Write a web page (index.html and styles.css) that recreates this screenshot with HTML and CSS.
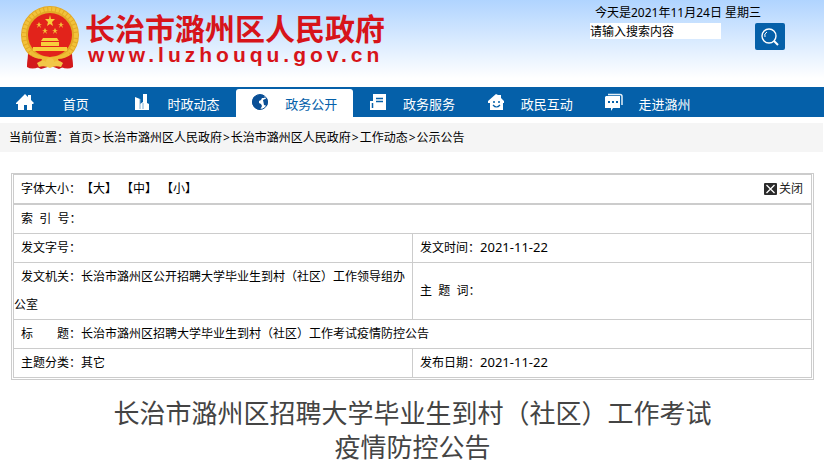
FILE: index.html
```
<!DOCTYPE html>
<html lang="zh-CN">
<head>
    <meta charset="UTF-8">
    <meta name="viewport" content="width=device-width, initial-scale=1.0">
    <title>长治市潞州区招聘大学毕业生到村（社区）工作考试疫情防控公告</title>
    <link rel="stylesheet" href="styles.css">
</head>
<body>

    <header class="header">
        <a class="logo" href="#">
            <svg class="emblem" viewBox="0 0 60 64" aria-hidden="true">
                <path d="M8 44 L6 61 L14 60 L20 63 L30 60 L38 63 L44 60 L52 61 L50 44 Z" fill="#c9151b"/>
                <circle cx="29" cy="29" r="29" fill="#e3a925"/>
                <circle cx="29" cy="29" r="26" fill="none" stroke="#f2c23a" stroke-width="4" stroke-dasharray="3 1"/>
                <circle cx="29" cy="29" r="22" fill="#e2231b"/>
                <path d="M29 9 l1 4 h4 l-3 3 1 4 -3 -2 -3 2 1 -4 -3 -3 h4z" fill="#f8cf3c"/>
                <path d="M18 16 l1 2 h2 l-2 1 1 3 -2 -2 -2 2 1 -3 -2 -1 h2z M40 16 l1 2 h2 l-2 1 1 3 -2 -2 -2 2 1 -3 -2 -1 h2z M24 22 l1 2 h2 l-2 1 1 3 -2 -2 -2 2 1 -3 -2 -1 h2z M34 22 l1 2 h2 l-2 1 1 3 -2 -2 -2 2 1 -3 -2 -1 h2z" fill="#f3bd37"/>
                <path d="M22 32 h14 l2 3 h-18z M20 36 h18 v4 h-18z M12 41 h34 v4 h-34z" fill="#f8cf3c"/>
                <path d="M9 44 q9 7 20 7 q11 0 20 -7 l-3 8 Q29 60 12 52Z" fill="#efbd34"/>
                <path d="M7 48 q7 5 14 5 l-3 8 q-7 3 -12 0z M51 48 q-7 5 -14 5 l3 8 q7 3 12 0z" fill="#d3191b"/>
                <path d="M16 57 q6 -4 9 -1 a4 4 0 0 1 8 0 q4 -3 9 1 l-2 4 q-6 -2 -11 1 q-6 -3 -11 -1z" fill="#f2c747"/>
            </svg>
            <span class="logo-text">
                <span class="site-name">长治市潞州区人民政府</span>
                <span class="site-url">www.luzhouqu.gov.cn</span>
            </span>
        </a>
        <div class="tools">
            <p class="today">今天是2021年11月24日 星期三</p>
            <form class="search">
                <input class="search-input" type="text" aria-label="搜索" value="请输入搜索内容">
                <button class="search-button" type="button" aria-label="搜索">
                    <svg width="18" height="18" viewBox="0 0 18 18" fill="none" stroke="#fff" stroke-width="1.4">
                        <circle cx="8" cy="8" r="7"/>
                        <path d="M4 9 a4 4 0 0 1 2 -5" stroke-width="1"/>
                        <path d="M13 13 l4 4" stroke-width="2"/>
                    </svg>
                </button>
            </form>
        </div>
    </header>

    <nav class="nav">
        <a class="nav-item" href="#">
            <svg viewBox="0 0 18 18"><path d="M9 1 L12 4 V2 h3 v5 l3 3 -1 1 h-1 v6 h-5 v-5 H8 v5 H2 v-6 H0 v-1z" fill="#fff"/></svg>
            <span>首页</span>
        </a>
        <a class="nav-item" href="#">
            <svg viewBox="0 0 18 18"><path d="M1 4 l5 2 v5 l3 -2 V1 h4 v9 l2 1 v6 H1z" fill="#fff"/><path d="M6 6 v10 M9 10 v6" stroke="#7faed3" stroke-width="1"/></svg>
            <span>时政动态</span>
        </a>
        <a class="nav-item active" href="#">
            <svg viewBox="0 0 18 18"><circle cx="9" cy="9" r="7.5" fill="#fff" stroke="#0a4f96"/><path d="M2 5 Q5 1 12 2 l2 3 -3 0 -1 2 -2 1 0 2 2 1 1 2 -2 4 Q2 16 1 9z M12 7 l4 -2 1 4 -1 4 -3 -1z" fill="#0a4f96"/></svg>
            <span>政务公开</span>
        </a>
        <a class="nav-item" href="#">
            <svg viewBox="0 0 18 18"><path d="M4 1 h13 v16 H1 V8 h3z" fill="#fff"/><path d="M7 5.500 h7 M7 8.500 h7 M3.500 10 v5" stroke="#0560a9" stroke-width="1.500"/></svg>
            <span>政务服务</span>
        </a>
        <a class="nav-item" href="#">
            <svg viewBox="0 0 18 18"><path d="M9 1 l2 1 h3 v3 l3 3 v2 h-1 v7 H3 v-7 H1 V8z" fill="#fff"/><circle cx="7" cy="9" r="1" fill="#0560a9"/><circle cx="12" cy="9" r="1" fill="#0560a9"/><path d="M6 12 q3.500 4 7 0" fill="none" stroke="#0560a9" stroke-width="1.200"/></svg>
            <span>政民互动</span>
        </a>
        <a class="nav-item" href="#">
            <svg viewBox="0 0 18 18"><path d="M3 1.500 h12 q2 0 2 2 V12" fill="none" stroke="#e5f0f8" stroke-width="1.500"/><path d="M1 3 h14 v12 H8 l-2 3 v-3 H0 V4z" fill="#fff"/><path d="M3 9 h2 M7 9 h2 M11 9 h2" stroke="#0560a9" stroke-width="2"/></svg>
            <span>走进潞州</span>
        </a>
    </nav>

    <div class="location">
        当前位置：<a href="#">首页</a><span class="sep">&gt;</span><a href="#">长治市潞州区人民政府</a><span class="sep">&gt;</span><a href="#">长治市潞州区人民政府</a><span class="sep">&gt;</span><a href="#">工作动态</a><span class="sep">&gt;</span><a href="#">公示公告</a>
    </div>

    <main class="main">
        <div class="info-box">
            <div class="info-bar">
                <div class="font-size">字体大小：<a href="#">【大】</a><a href="#">【中】</a><a href="#">【小】</a></div>
                <a class="close" href="#">
                    <svg width="13" height="13" viewBox="0 0 13 13" aria-hidden="true">
                        <rect width="13" height="12" rx="1" fill="#2b2b2b"/>
                        <path d="M2.500 2 l8 8 M10.500 2 l-8 8" stroke="#fff" stroke-width="1.300"/>
                    </svg>
                    <span>关闭</span>
                </a>
            </div>
            <table class="info-table">
                <tr>
                    <td colspan="2">索&nbsp;&nbsp;引&nbsp;&nbsp;号：</td>
                </tr>
                <tr>
                    <td>发文字号：</td>
                    <td>发文时间：<span class="date">2021-11-22</span></td>
                </tr>
                <tr>
                    <td>发文机关：长治市潞州区公开招聘大学毕业生到村（社区）工作领导组办公室</td>
                    <td>主&nbsp;&nbsp;题&nbsp;&nbsp;词：</td>
                </tr>
                <tr>
                    <td colspan="2">标&emsp;&emsp;题：长治市潞州区招聘大学毕业生到村（社区）工作考试疫情防控公告</td>
                </tr>
                <tr>
                    <td>主题分类：其它</td>
                    <td>发布日期：<span class="date">2021-11-22</span></td>
                </tr>
            </table>
        </div>

        <h1 class="title">长治市潞州区招聘大学毕业生到村（社区）工作考试疫情防控公告</h1>
    </main>

</body>
</html>
```
FILE: styles.css
```
* {
    box-sizing: border-box;
}

body, p, h1 {
    margin: 0;
}

body {
    background-color: #fff;
    font-family: "Noto Sans", "Noto Sans CJK SC", sans-serif;
    font-size: 12px;
    color: #000;
    text-spacing-trim: space-all;
}

a {
    color: inherit;
    text-decoration: none;
}

/* header */
.header {
    display: flex;
    justify-content: space-between;
    height: 87px;
    padding: 4px 39px 0 21px;
    background: linear-gradient(#b0d4ff, #fff 90%);
}

.logo {
    display: flex;
    gap: 4px;
    color: #d7141a;
    font-weight: bold;
}

.emblem {
    width: 60px;
    height: 64px;
    margin-top: 2px;
}

.logo-text {
    display: flex;
    flex-direction: column;
    padding-top: 9px;
}

.site-name {
    font-size: 30px;
    line-height: 32px;
}

.site-url {
    padding-left: 3px;
    font-family: "Liberation Sans", sans-serif;
    font-size: 21px;
    line-height: 20px;
    letter-spacing: 4px;
}

.tools {
    width: 195px;
}

.today {
    padding-left: 5px;
    line-height: 18px;
}

.search {
    display: flex;
    justify-content: space-between;
    align-items: flex-start;
    margin-top: 1px;
}

.search-input {
    width: 131px;
    height: 16px;
    padding: 0;
    border: 0;
    outline: 0;
    background-color: #fff;
    font: inherit;
    color: #000;
}

.search-button {
    display: flex;
    align-items: center;
    justify-content: center;
    width: 30px;
    height: 27px;
    padding: 0;
    border: 0;
    border-radius: 2px;
    background-color: #0560a9;
    cursor: pointer;
}

/* nav */
.nav {
    display: grid;
    grid-template-columns: repeat(7, 1fr);
    height: 30px;
    padding-top: 2px;
    background-color: #0560a9;
}

.nav-item {
    display: flex;
    align-items: center;
    margin-left: 1px;
    padding-left: 15px;
    font-size: 13px;
    color: #fff;
}

.nav-item svg {
    width: 18px;
    height: 18px;
    margin-bottom: 2px;
}

.nav-item span {
    flex: 1;
    text-align: center;
}

.nav-item.active {
    border-radius: 3px 3px 0 0;
    background-color: #fff;
    color: #0560a9;
}

/* breadcrumb */
.location {
    margin: 6px 1px 0 0;
    padding-left: 9px;
    background-color: #f5f5f5;
    line-height: 29px;
}

.sep {
    padding: 0 1px;
}

/* article info */
.main {
    padding: 21px 10px 20px 11px;
}

.info-box {
    padding: 0 1px 1px;
    border: 1px solid #ccc;
}

.info-bar {
    display: flex;
    justify-content: space-between;
    padding: 0 8px 0 7px;
    border: 1px solid #ccc;
    line-height: 28px;
}

.font-size a {
    margin-right: 4px;
}

.close {
    display: flex;
    align-items: center;
    gap: 2px;
    color: #222;
}

.info-table {
    width: 100%;
    border-collapse: collapse;
    table-layout: fixed;
}

.info-table td {
    padding: 0;
    border: 1px solid #ccc;
    line-height: 28px;
    text-indent: 7px;
}

.date {
    font-size: 13px;
    line-height: 20px;
}

.title {
    margin-top: 16px;
    padding: 0 90px;
    font-size: 26px;
    font-weight: normal;
    line-height: 34px;
    text-align: center;
    color: #444;
}
```
